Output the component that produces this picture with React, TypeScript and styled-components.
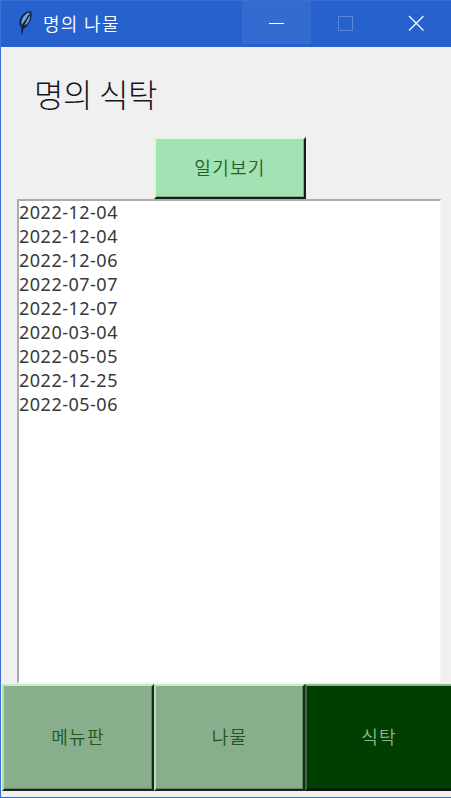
import React from "react";
import styled, { createGlobalStyle } from "styled-components";

const Global = createGlobalStyle`
  * { box-sizing: border-box; }
  html, body { margin: 0; padding: 0; overflow: hidden; }
`;

const Window = styled.div`
  width: 451px;
  height: 798px;
  display: flex;
  flex-direction: column;
  background: #f0f0f0;
  border-left: 1px solid #3b6fd2;
  border-bottom: 1px solid #3b6cc4;
  font-family: "Noto Sans CJK KR", sans-serif;
  font-weight: 300;
  overflow: hidden;
`;

const TitleBar = styled.header`
  flex: none;
  height: 47px;
  display: flex;
  background: #2761cd;
  border-top: 1px solid #3b6fd2;
  color: #fff;
`;

const AppIcon = styled.svg`
  margin: 9px 0 0 16px;
  width: 17px;
  height: 27px;
  flex: none;
`;

const Title = styled.div`
  flex: 1;
  margin-left: 9px;
  font-size: 18px;
  font-weight: 350;
  letter-spacing: 1.3px;
  line-height: 45px;
  white-space: pre;
`;

const WindowButton = styled.div<{ $lit?: boolean }>`
  width: ${(p) => (p.$lit ? 69 : 70)}px;
  height: ${(p) => (p.$lit ? 43 : 45)}px;
  background: ${(p) => (p.$lit ? "#346bd0" : "transparent")};
  svg { display: block; width: 70px; height: 45px; }
`;

const Heading = styled.h1`
  flex: none;
  margin: 0;
  height: 90px;
  padding-left: 33px;
  font-size: 32px;
  font-weight: 300;
  line-height: 92px;
  letter-spacing: -0.35px;
  color: #17141c;
  white-space: pre;
`;

const Raised = styled.button`
  margin: 0;
  padding: 0 0 3px;
  border-style: solid;
  border-width: 2px;
  border-radius: 0;
  font-family: inherit;
  font-size: 18px;
  font-weight: 350;
  letter-spacing: 1.3px;
  line-height: 20px;
`;

const DiaryButton = styled(Raised)`
  flex: none;
  width: 152px;
  height: 62px;
  margin-left: 153px;
  background: #a3e2b3;
  color: #255e2b;
  border-color: #d6fae2 #142019 #142019 #d6fae2;
  box-shadow: inset -1px -1px #7fac8b;
`;

const DateList = styled.ul`
  flex: none;
  width: 424px;
  height: 484px;
  margin: 0 0 0 16px;
  padding: 0;
  list-style: none;
  background: #fff;
  border-style: solid;
  border-width: 2px 1px 1px 2px;
  border-color: #acacac #f7f7f7 #f7f7f7 #acacac;
  font-family: "Noto Sans", sans-serif;
  font-size: 18px;
  font-weight: 400;
  letter-spacing: 0.5px;
  color: #38383a;
`;

const DateRow = styled.li`
  height: 24px;
  line-height: 22px;
  white-space: nowrap;
`;

const Nav = styled.nav`
  flex: none;
  display: grid;
  grid-template-columns: 152px 151px 146px;
  height: 107px;
  margin: 1px 0 0 1px;
`;

const Tab = styled(Raised)<{ $active?: boolean }>`
  background: ${(p) => (p.$active ? "#003f00" : "#89ae8b")};
  color: ${(p) => (p.$active ? "#8cb78c" : "#1d5523")};
  border-color: ${(p) =>
    p.$active ? "#8ab98c #003f00 #0b190b #3a693c" : "#c0f0c1 #1c271d #1c271d #b4dfb6"};
  border-right-width: ${(p) => (p.$active ? 0 : 2)}px;
  box-shadow: ${(p) => (p.$active ? "inset 0 -1px #002000" : "inset -1px -1px #668568")};
`;

const dates = [
  "2022-12-04", "2022-12-04", "2022-12-06", "2022-07-07", "2022-12-07",
  "2020-03-04", "2022-05-05", "2022-12-25", "2022-05-06",
];

export default function App() {
  return (
    <>
      <Global />
      <Window>
        <TitleBar>
          <AppIcon viewBox="0 0 17 27">
            <path d="M5 24V17C1 16 3 7 7 4Q10 1 14 2Q15 9 11 14Q9 18 6 18" fill="#182b43" stroke="#10213a" strokeWidth="1" />
            <path d="M4.5 15Q4 9 8 5Q11 2 13 3Q10 8 4.5 15Z" fill="#6daade" />
            <path d="M7 15.5Q10 10 13 4.5Q13.5 10 10 14Z" fill="#6c9fd0" />
            <path d="M5 22Q6 14 12 5" fill="none" stroke="#10182a" strokeWidth="1" />
          </AppIcon>
          <Title>명의 나물</Title>
          <WindowButton $lit>
            <svg viewBox="0 0 70 45"><path d="M27 22.5H42" stroke="#fff" /></svg>
          </WindowButton>
          <WindowButton>
            <svg viewBox="0 0 70 45"><rect x="27.5" y="15.5" width="14" height="14" fill="none" stroke="#5c87d9" /></svg>
          </WindowButton>
          <WindowButton>
            <svg viewBox="0 0 70 45"><path d="M28 15L42.5 29.5M42.5 15L28 29.5" fill="none" stroke="#fff" strokeWidth="1.2" /></svg>
          </WindowButton>
        </TitleBar>
        <Heading>명의 식탁</Heading>
        <DiaryButton>일기보기</DiaryButton>
        <DateList>
          {dates.map((date, i) => <DateRow key={i}>{date}</DateRow>)}
        </DateList>
        <Nav>
          <Tab>메뉴판</Tab>
          <Tab>나물</Tab>
          <Tab $active>식탁</Tab>
        </Nav>
      </Window>
    </>
  );
}
